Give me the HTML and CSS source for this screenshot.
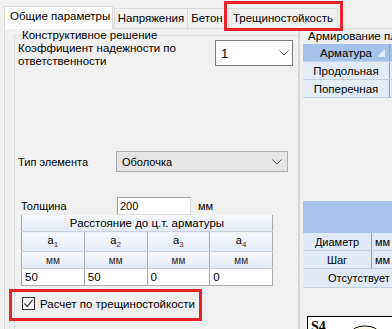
FILE: index.html
```html
<!DOCTYPE html>
<html lang="ru">
<head>
    <meta charset="UTF-8">
    <meta name="viewport" content="width=device-width, initial-scale=1.0">
    <title>Параметры расчета</title>
    <link rel="stylesheet" href="styles.css">
</head>
<body>
<div class="window">
    <div class="tabs">
        <div class="tab active">Общие параметры</div>
        <div class="tab tab-2">Напряжения</div>
        <div class="tab tab-3">Бетон</div>
        <div class="tab tab-4">Трещиностойкость</div>
    </div>

    <div class="page">
        <div class="left">
            <fieldset class="group">
                <legend>Конструктивное решение</legend>

                <div class="row row-factor">
                    <div class="label label-factor">Коэффициент надежности по<br>ответственности</div>
                    <div class="combo combo-factor">
                        <span>1</span>
                        <svg class="chevron" width="10" height="6" viewBox="0 0 10 6"><path d="M0.5 0.5 L5 5 L9.5 0.5" fill="none" stroke="#606060" stroke-width="1"/></svg>
                    </div>
                </div>

                <div class="row row-type">
                    <div class="label label-type">Тип элемента</div>
                    <div class="combo combo-type">
                        <span>Оболочка</span>
                        <svg class="chevron" width="10" height="6" viewBox="0 0 10 6"><path d="M0.5 0.5 L5 5 L9.5 0.5" fill="none" stroke="#505050" stroke-width="1"/></svg>
                    </div>
                </div>

                <div class="row row-thick">
                    <div class="label label-thick">Толщина</div>
                    <div class="textbox">200</div>
                    <div class="unit">мм</div>
                </div>

                <table class="grid">
                    <tr class="head-row">
                        <td colspan="4">Расстояние до ц.т. арматуры</td>
                    </tr>
                    <tr class="sub-row">
                        <td>a<sub>1</sub></td>
                        <td>a<sub>2</sub></td>
                        <td>a<sub>3</sub></td>
                        <td>a<sub>4</sub></td>
                    </tr>
                    <tr class="unit-row">
                        <td>мм</td>
                        <td>мм</td>
                        <td>мм</td>
                        <td>мм</td>
                    </tr>
                    <tr class="value-row">
                        <td>50</td>
                        <td>50</td>
                        <td>0</td>
                        <td>0</td>
                    </tr>
                </table>

                <div class="check-row">
                    <span class="checkbox">
                        <svg width="11" height="11" viewBox="0 0 11 11"><path d="M1.5 5.5 L4.2 8.5 L9.5 1.8" fill="none" stroke="#333" stroke-width="1.2"/></svg>
                    </span>
                    <span class="check-text">Расчет по трещиностойкости</span>
                </div>
            </fieldset>
        </div>

        <div class="splitter"></div>

        <div class="right">
            <div class="right-title">Армирование пл</div>
            <table class="rebar">
                <tr>
                    <th class="sort-head">Арматура<span class="sort"></span></th>
                    <th></th>
                </tr>
                <tr>
                    <td>Продольная</td>
                    <td></td>
                </tr>
                <tr>
                    <td>Поперечная</td>
                    <td></td>
                </tr>
            </table>

            <div class="band"></div>
            <table class="params">
                <tr>
                    <td class="p-name">Диаметр</td>
                    <td class="p-unit">мм</td>
                </tr>
                <tr>
                    <td class="p-name">Шаг</td>
                    <td class="p-unit">мм</td>
                </tr>
                <tr>
                    <td colspan="2" class="p-none">Отсутствует</td>
                </tr>
            </table>

            <div class="sketch">
                <svg width="90" height="14" viewBox="0 0 90 14">
                    <text x="3" y="14" font-family="Liberation Serif, serif" font-weight="bold" font-size="14" fill="#000">S4</text>
                    <ellipse cx="57" cy="15" rx="13" ry="6" fill="#fffbe6" stroke="#000" stroke-width="1"/>
                </svg>
            </div>
        </div>
    </div>

    <div class="mark mark-tab"></div>
    <div class="mark mark-check"></div>
</div>
</body>
</html>
```

FILE: styles.css
```css
body {
    margin: 0;
    background: #f0f0f0;
    font-family: "Liberation Sans", Arial, sans-serif;
    font-size: 11px;
    color: #000;
    overflow: hidden;
}
.window {
    position: relative;
    width: 392px;
    height: 329px;
    overflow: hidden;
}

/* tabs */
.tabs {
    display: flex;
    align-items: flex-end;
    height: 28px;
    padding-left: 4px;
    font-size: 11.5px;
}
.tab {
    box-sizing: border-box;
    height: 20px;
    line-height: 18px;
    border: 1px solid #d9d9d9;
    border-bottom: none;
    text-align: center;
    white-space: nowrap;
    flex: none;
}
.tab.active {
    width: 109px;
    height: 23px;
    margin-bottom: -1px;
    padding-left: 5px;
    text-align: left;
    background: #fff;
    z-index: 1;
}
.tab-2 {
    width: 74px;
    margin-left: 1px;
}
.tab-3 {
    width: 40px;
    margin-left: -1px;
}
.tab-4 {
    width: 110px;
    margin-left: 1px;
}

/* page */
.page {
    display: flex;
    height: 310px;
    margin-left: 4px;
    border-top: 1px solid #d9d9d9;
    border-left: 1px solid #d9d9d9;
}
.left {
    width: 293px;
    flex: none;
}
.group {
    margin: 0 0 0 9px;
    padding: 0;
    min-width: 0;
    height: 300px;
    border: none;
    border-top: 1px solid #dcdcdc;
    border-left: 1px solid #dcdcdc;
}
.group legend {
    margin-left: 5px;
    padding: 0 2px;
    line-height: 12px;
    font-size: 11.5px;
}
.row {
    display: flex;
    align-items: center;
}
.label {
    flex: none;
    white-space: nowrap;
}
.row-factor {
    height: 26px;
    margin-top: -1px;
    align-items: flex-start;
}
.label-factor {
    width: 197px;
    margin-left: 3px;
    margin-top: 2px;
    line-height: 13px;
    font-size: 11.5px;
}
.combo {
    box-sizing: border-box;
    display: flex;
    align-items: center;
    justify-content: space-between;
    flex: none;
}
.combo-factor {
    width: 78px;
    height: 26px;
    padding: 0 3px 0 5px;
    background: #fff;
    border: 1px solid #7a7a7a;
    font-size: 13px;
}
.row-type {
    height: 21px;
    margin-top: 85px;
}
.label-type {
    width: 98px;
    margin-left: 3px;
}
.combo-type {
    width: 172px;
    height: 21px;
    padding: 0 5px 0 5px;
    background: #e5e5e5;
    border: 1px solid #adadad;
}
.row-thick {
    height: 18px;
    margin-top: 25px;
}
.label-thick {
    width: 96px;
    margin-left: 6px;
}
.textbox {
    box-sizing: border-box;
    width: 74px;
    height: 18px;
    padding-left: 2px;
    line-height: 16px;
    background: #fff;
    border: 1px solid #dcdcdc;
    border-top-color: #a0a0a0;
    border-left-color: #a0a0a0;
}
.unit {
    margin-left: 7px;
}

/* distance grid */
.grid {
    width: 252px;
    margin-left: 6px;
    border-collapse: collapse;
    table-layout: fixed;
    text-align: center;
}
.grid td {
    padding: 0;
    border-left: 1px solid #a9a9a9;
    border-right: 1px solid #a9a9a9;
    border-bottom: 1px solid #c8d0dc;
}
.grid .head-row td,
.grid .sub-row td,
.grid .unit-row td {
    background: linear-gradient(#f6f8fc, #e4eaf4);
}
.grid .head-row td {
    height: 16px;
    line-height: 16px;
    font-size: 11.5px;
}
.grid .sub-row td {
    height: 19px;
    font-size: 11px;
}
.grid sub {
    font-size: 8px;
    color: #6b1e1e;
}
.grid .unit-row td {
    height: 16px;
    font-size: 10px;
    color: #222;
}
.grid .value-row td {
    height: 16px;
    padding-left: 3px;
    text-align: left;
    background: #fff;
    border-bottom: 1px solid #a9a9a9;
    font-size: 11.5px;
}
.check-row {
    display: flex;
    align-items: center;
    height: 13px;
    margin-top: 11px;
    margin-left: 7px;
}
.checkbox {
    box-sizing: border-box;
    display: flex;
    align-items: center;
    justify-content: center;
    width: 13px;
    height: 13px;
    background: #fff;
    border: 1px solid #333;
}
.check-text {
    margin-left: 5px;
    white-space: nowrap;
    font-size: 11.5px;
}

/* right part */
.splitter {
    width: 2px;
    flex: none;
    background: #d6d6d6;
}
.right {
    width: 200px;
    flex: none;
}
.right-title {
    padding-left: 8px;
    line-height: 14px;
    white-space: nowrap;
    font-size: 11.5px;
}
.rebar {
    margin-top: 1px;
    margin-left: 3px;
    border-collapse: collapse;
    table-layout: fixed;
    font-size: 11.5px;
}
.rebar th,
.rebar td {
    padding: 0;
    height: 17px;
    font-weight: normal;
    text-align: center;
    border-right: 1px solid #8e9fb8;
    border-bottom: 1px solid #c3d0e2;
}
.rebar th {
    width: 86px;
    background: #a6c2e8;
}
.rebar th + th {
    width: 100px;
}
.rebar td {
    background: #e3ebf7;
}
.sort-head {
    position: relative;
}
.sort {
    position: absolute;
    right: 4px;
    top: 5px;
    width: 0;
    height: 0;
    border-left: 8px solid transparent;
    border-bottom: 8px solid #e4ecf7;
}
.band {
    height: 32px;
    margin-top: 103px;
    margin-left: 3px;
    background: #a8c4e8;
}
.params {
    margin-left: 3px;
    border-collapse: collapse;
    table-layout: fixed;
    width: 150px;
}
.params td {
    padding: 0;
    height: 17px;
    text-align: center;
    background: #e0e9f6;
    border-bottom: 1px solid #c3d0e2;
}
.params .p-name {
    width: 68px;
    border-right: 1px solid #8e9fb8;
}
.params .p-unit {
    text-align: left;
    padding-left: 3px;
}
.params .p-none {
    height: 18px;
    text-align: left;
    padding-left: 25px;
}
.sketch {
    margin-top: 28px;
    margin-left: 7px;
    width: 120px;
    height: 30px;
    background: #fff;
    border: 1px solid #000;
}
.sketch svg {
    display: block;
}

/* red annotation frames */
.mark {
    position: absolute;
    box-sizing: border-box;
    border: 3px solid #e8222b;
}
.mark-tab {
    left: 224px;
    top: 1px;
    width: 119px;
    height: 30px;
}
.mark-check {
    left: 9px;
    top: 289px;
    width: 193px;
    height: 32px;
}
```
